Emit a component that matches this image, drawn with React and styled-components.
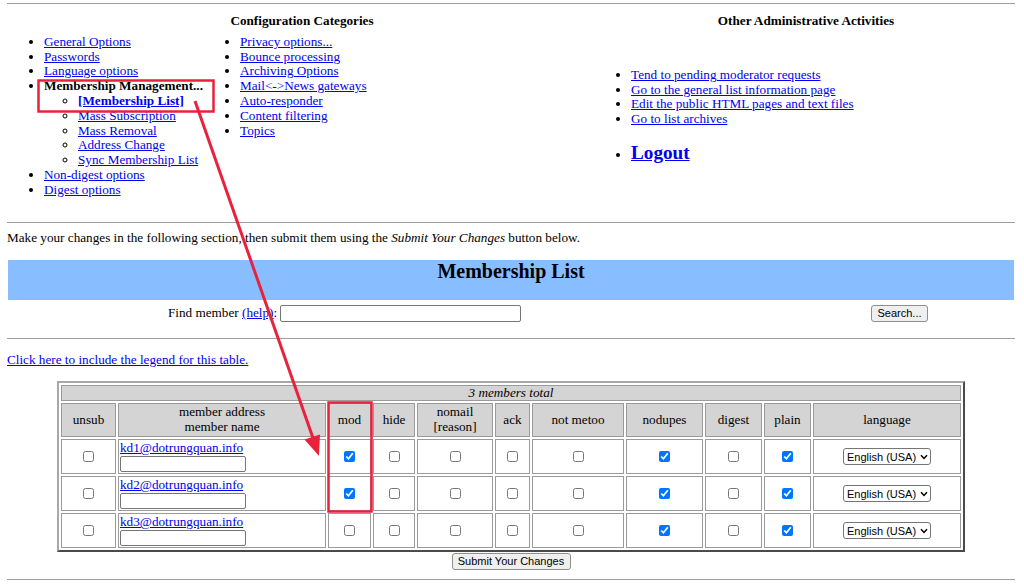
import React from "react";
import styled, { createGlobalStyle } from "styled-components";

const GlobalStyle = createGlobalStyle`
  html, body { margin: 0; padding: 0; background: #fff; }
  body {
    font-family: "Liberation Serif", "Times New Roman", serif;
    font-size: 13.2px;
    line-height: 14.8px;
    color: #000;
  }
`;

const Page = styled.div`
  position: relative;
  width: 1024px;
  height: 584px;
  overflow: hidden;
  box-sizing: border-box;
  padding: 3px 9px 0 7px;
`;

const Rule = styled.hr`
  margin: ${(p) => p.$mt || 0}px 0 0;
  border: 0;
  border-top: 1px solid #9e9e9e;
  height: 0;
`;

const Link = styled.a`
  color: #0000ee;
  text-decoration: underline;
  font-weight: ${(p) => (p.$bold ? "bold" : "normal")};
`;

const TopGrid = styled.div`
  display: grid;
  grid-template-columns: 590px 1fr;
  margin-top: 10px;
`;

const SectionTitle = styled.div`
  font-weight: bold;
  text-align: center;
`;

const ListsGrid = styled.div`
  display: grid;
  grid-template-columns: 196px 1fr;
  margin-top: 6px;
`;

const NavList = styled.ul`
  margin: ${(p) => p.$mt || 0}px 0 0;
  padding-left: ${(p) => p.$indent}px;
  list-style: ${(p) => (p.$circle ? "circle" : "disc")};
`;

const CurrentLabel = styled.span`
  font-weight: bold;
`;

const LogoutItem = styled.li`
  margin-top: 15px;
  line-height: 22px;
`;

const LogoutLink = styled(Link)`
  font-size: 19.2px;
  font-weight: bold;
`;

const Intro = styled.div`
  margin-top: 8px;
`;

const Banner = styled.div`
  margin: 15px 1px 0;
  height: 40px;
  background: #88beff;
`;

const BannerTitle = styled.h2`
  margin: 0;
  font-size: 20px;
  line-height: 23px;
  font-weight: bold;
  text-align: center;
`;

const FindRow = styled.div`
  display: flex;
  align-items: center;
  height: 17px;
  margin-top: 5px;
`;

const FindGroup = styled.div`
  display: flex;
  align-items: center;
  margin-left: 161px;
  white-space: pre;
`;

const FindInput = styled.input`
  width: 241px;
  height: 17px;
  box-sizing: border-box;
  margin: 0 0 0 3px;
  padding: 0 2px;
  border: 1px solid #767676;
  border-radius: 2px;
  background: #fff;
`;

const Button = styled.button`
  width: ${(p) => p.$w}px;
  height: 17px;
  box-sizing: border-box;
  padding: 0;
  margin: 0 ${(p) => p.$mr || 0}px 0 ${(p) => (p.$pushRight ? "auto" : "0")};
  font-family: "Liberation Sans", Arial, sans-serif;
  font-size: 11px;
  line-height: 15px;
  color: #000;
  background: #efefef;
  border: 1px solid #8f8f8f;
  border-radius: 3px;
`;

const LegendLine = styled.div`
  margin-top: 14px;
`;

const MemberTable = styled.div`
  display: grid;
  grid-template-columns: 55px 208px 43px 42px 76px 35px 92px 77px 57px 47px 148px;
  grid-template-rows: 16px 34px 35px 35px 35px;
  gap: 2px;
  width: 908px;
  box-sizing: border-box;
  margin: 13px auto 0;
  padding: 2px;
  border: 2px solid;
  border-color: #a8a8a8 #4a4a4a #4a4a4a #a8a8a8;
`;

const Cell = styled.div`
  box-sizing: border-box;
  border: 1px solid #9a9a9a;
  padding: 1px;
  display: flex;
  align-items: center;
  justify-content: center;
  text-align: center;
  background: ${(p) => (p.$head ? "#d4d4d4" : "#fff")};
`;

const CaptionCell = styled(Cell)`
  grid-column: 1 / -1;
  padding: 0;
  font-style: italic;
`;

const AddrCell = styled(Cell)`
  flex-direction: column;
  align-items: flex-start;
  justify-content: flex-start;
  text-align: left;
`;

const NameInput = styled.input`
  width: 126px;
  height: 16px;
  box-sizing: border-box;
  margin: 0;
  padding: 0 2px;
  border: 1px solid #767676;
  border-radius: 2px;
  background: #fff;
`;

const Check = styled.input.attrs({ type: "checkbox" })`
  width: 11px;
  height: 11px;
  margin: 0;
`;

const SelectWrap = styled.span`
  position: relative;
  display: inline-block;
  height: 17px;
`;

const LangSelect = styled.select`
  appearance: none;
  -webkit-appearance: none;
  width: 88px;
  height: 17px;
  box-sizing: border-box;
  margin: 0;
  padding: 0 10px 0 3px;
  font-family: "Liberation Sans", Arial, sans-serif;
  font-size: 11px;
  color: #000;
  background: #fff;
  border: 1px solid #767676;
  border-radius: 3px;
  text-overflow: clip;
`;

const Chevron = styled.svg`
  position: absolute;
  right: 3px;
  top: 6px;
  width: 8px;
  height: 6px;
  pointer-events: none;
`;

const SubmitRow = styled.div`
  display: flex;
  justify-content: center;
  margin-top: 1px;
`;

const Annotation = styled.svg`
  position: absolute;
  left: 0;
  top: 0;
  width: 1024px;
  height: 584px;
  pointer-events: none;
`;

const headers = [
  ["unsub"],
  ["member address", "member name"],
  ["mod"],
  ["hide"],
  ["nomail", "[reason]"],
  ["ack"],
  ["not metoo"],
  ["nodupes"],
  ["digest"],
  ["plain"],
  ["language"],
];

const members = [
  { email: "kd1@dotrungquan.info", mod: true },
  { email: "kd2@dotrungquan.info", mod: true },
  { email: "kd3@dotrungquan.info", mod: false },
];

const LanguagePicker = () => (
  <SelectWrap>
    <LangSelect defaultValue="en">
      <option value="en">English (USA)</option>
    </LangSelect>
    <Chevron viewBox="0 0 8 6">
      <path d="M1 1.2 L4 4.4 L7 1.2" fill="none" stroke="#000" strokeWidth="1.5" />
    </Chevron>
  </SelectWrap>
);

export default function App() {
  return (
    <>
      <GlobalStyle />
      <Page>
        <Rule />
        <TopGrid>
          <div>
            <SectionTitle>Configuration Categories</SectionTitle>
            <ListsGrid>
              <NavList $indent={37}>
                <li><Link href="#">General Options</Link></li>
                <li><Link href="#">Passwords</Link></li>
                <li><Link href="#">Language options</Link></li>
                <li>
                  <CurrentLabel>Membership Management...</CurrentLabel>
                  <NavList $indent={34} $circle>
                    <li><Link href="#" $bold>[Membership List]</Link></li>
                    <li><Link href="#">Mass Subscription</Link></li>
                    <li><Link href="#">Mass Removal</Link></li>
                    <li><Link href="#">Address Change</Link></li>
                    <li><Link href="#">Sync Membership List</Link></li>
                  </NavList>
                </li>
                <li><Link href="#">Non-digest options</Link></li>
                <li><Link href="#">Digest options</Link></li>
              </NavList>
              <NavList $indent={37}>
                <li><Link href="#">Privacy options...</Link></li>
                <li><Link href="#">Bounce processing</Link></li>
                <li><Link href="#">Archiving Options</Link></li>
                <li><Link href="#">Mail&lt;-&gt;News gateways</Link></li>
                <li><Link href="#">Auto-responder</Link></li>
                <li><Link href="#">Content filtering</Link></li>
                <li><Link href="#">Topics</Link></li>
              </NavList>
            </ListsGrid>
          </div>
          <div>
            <SectionTitle>Other Administrative Activities</SectionTitle>
            <NavList $indent={34} $mt={39}>
              <li><Link href="#">Tend to pending moderator requests</Link></li>
              <li><Link href="#">Go to the general list information page</Link></li>
              <li><Link href="#">Edit the public HTML pages and text files</Link></li>
              <li><Link href="#">Go to list archives</Link></li>
              <LogoutItem><LogoutLink href="#">Logout</LogoutLink></LogoutItem>
            </NavList>
          </div>
        </TopGrid>

        <Rule $mt={24} />
        <Intro>
          Make your changes in the following section, then submit them using the{" "}
          <i>Submit Your Changes</i> button below.
        </Intro>

        <Banner>
          <BannerTitle>Membership List</BannerTitle>
        </Banner>

        <FindRow>
          <FindGroup>
            Find member <Link href="#">(help)</Link>:
            <FindInput type="text" />
          </FindGroup>
          <Button $w={57} $pushRight $mr={87}>Search...</Button>
        </FindRow>

        <Rule $mt={16} />
        <LegendLine>
          <Link href="#">Click here to include the legend for this table.</Link>
        </LegendLine>

        <MemberTable>
          <CaptionCell $head>3 members total</CaptionCell>
          {headers.map((lines) => (
            <Cell $head key={lines.join("-")}>
              <div>
                {lines.map((l) => (
                  <div key={l}>{l}</div>
                ))}
              </div>
            </Cell>
          ))}
          {members.map((m) => (
            <React.Fragment key={m.email}>
              <Cell><Check /></Cell>
              <AddrCell>
                <Link href="#">{m.email}</Link>
                <NameInput type="text" />
              </AddrCell>
              <Cell><Check defaultChecked={m.mod} /></Cell>
              <Cell><Check /></Cell>
              <Cell><Check /></Cell>
              <Cell><Check /></Cell>
              <Cell><Check /></Cell>
              <Cell><Check defaultChecked /></Cell>
              <Cell><Check /></Cell>
              <Cell><Check defaultChecked /></Cell>
              <Cell><LanguagePicker /></Cell>
            </React.Fragment>
          ))}
        </MemberTable>

        <SubmitRow>
          <Button $w={119}>Submit Your Changes</Button>
        </SubmitRow>
        <Rule $mt={9} />

        <Annotation viewBox="0 0 1024 584">
          <rect x="38.5" y="80.5" width="175" height="31" fill="none" stroke="#e8223c" strokeWidth="2.5" />
          <rect x="328.5" y="402.5" width="43" height="109" fill="none" stroke="#e8223c" strokeWidth="2.5" />
          <line x1="195" y1="101" x2="313" y2="438" stroke="#e8223c" strokeWidth="3" />
          <polygon points="319,456 304.5,439.5 320,434.5" fill="#e8223c" />
        </Annotation>
      </Page>
    </>
  );
}
